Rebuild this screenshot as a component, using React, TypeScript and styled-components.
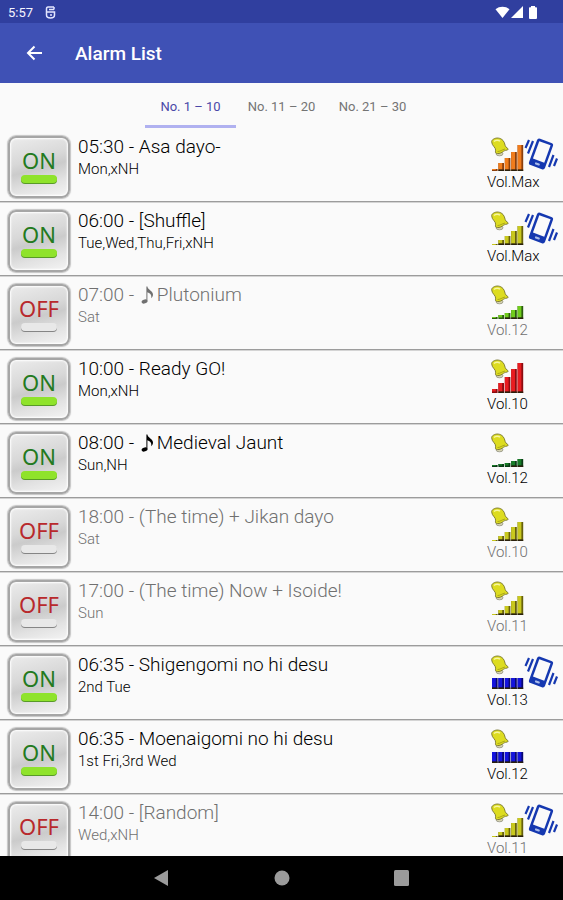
import React, { useState } from "react";
import styled, { createGlobalStyle } from "styled-components";

const GlobalStyle = createGlobalStyle`
  *, *::before, *::after { box-sizing: border-box; }
  body {
    margin: 0;
    background: #fafafa;
    font-family: Roboto, "Noto Sans", sans-serif;
  }
`;

const Screen = styled.div`
  display: flex;
  flex-direction: column;
  height: 100vh;
  overflow: hidden;
`;

const StatusBar = styled.div`
  display: flex;
  align-items: center;
  flex: none;
  height: 23px;
  padding: 2px 24px 0 8px;
  gap: 12px;
  background: #303f9f;
  color: #f4f5ff;
  font-size: 13px;
  line-height: 16px;
`;

const StatusIcons = styled.div`
  display: flex;
  align-items: center;
  margin-left: auto;
  gap: 1px;
`;

const AppBar = styled.header`
  display: flex;
  align-items: center;
  flex: none;
  height: 60px;
  padding: 0 22px;
  gap: 28px;
  background: #3f51b5;
  color: #fff;
`;

const BackButton = styled.button`
  display: flex;
  padding: 0;
  border: 0;
  background: none;
  color: inherit;
`;

const Title = styled.h1`
  margin: 0;
  padding-top: 2px;
  font-size: 19px;
  font-weight: 500;
  line-height: 24px;
`;

const Tabs = styled.nav`
  display: flex;
  justify-content: center;
  flex: none;
  height: 45px;
`;

const Tab = styled.button<{ $active: boolean }>`
  width: 91px;
  padding: 4px 0 0;
  border: 0;
  border-bottom: 3px solid ${(p) => (p.$active ? "#b0b1f0" : "transparent")};
  background: none;
  color: ${(p) => (p.$active ? "#4a48a8" : "#747474")};
  font-family: inherit;
  font-size: 13px;
  white-space: nowrap;
`;

const List = styled.ul`
  flex: 1;
  min-height: 0;
  margin: 0;
  padding: 0;
  overflow: hidden;
  list-style: none;
`;

const Row = styled.li<{ $on: boolean }>`
  display: flex;
  align-items: flex-start;
  height: 74px;
  padding: 8px 4px 0 8px;
  gap: 8px;
  border-bottom: 1px solid #9c9c9c;
  box-shadow: 0 1px 0 #d4d4d4;
  color: ${(p) => (p.$on ? "#000" : "#707070")};
  font-weight: 300;
`;

const Toggle = styled.button<{ $on: boolean }>`
  display: flex;
  flex-direction: column;
  align-items: center;
  flex: none;
  width: 62px;
  height: 62px;
  padding: 11px 0 0;
  border: 2px solid #a6a6a6;
  border-radius: 8px;
  background: linear-gradient(165deg, #ececec 0%, #d8d8d8 38%, #cbcbcb 52%, #e2e2e2 75%, #f4f4f4 100%);
  box-shadow: inset 0 0 2px 1px #ffffff, 0 0 1px 1px #c4c4c4;
  color: ${(p) => (p.$on ? "#237a20" : "#b8292c")};
  font-family: "Noto Sans", sans-serif;
  font-size: 22px;
  line-height: 22px;
`;

const Lamp = styled.span<{ $on: boolean }>`
  width: 36px;
  height: 8px;
  margin-top: 4px;
  border-radius: 4px;
  background: ${(p) => (p.$on ? "#8fe32b" : "#e8e8e8")};
  box-shadow: 0 1px 0 ${(p) => (p.$on ? "#589a27" : "#858585")};
`;

const Details = styled.div`
  flex: 1;
  min-width: 0;
`;

const Name = styled.div`
  display: flex;
  align-items: center;
  font-size: 19px;
  line-height: 22px;
  white-space: pre;
`;

const Days = styled.div`
  font-size: 15px;
  line-height: 22px;
`;

const Sound = styled.div`
  flex: none;
  width: 72px;
`;

const Symbols = styled.div`
  display: flex;
  height: 36px;
  padding-left: 4px;
`;

const Volume = styled.div`
  font-size: 15px;
  line-height: 20px;
`;

const NavBar = styled.footer`
  display: flex;
  align-items: center;
  justify-content: center;
  flex: none;
  height: 44px;
  gap: 104px;
  background: #000;
`;

const NavButton = styled.button`
  display: flex;
  padding: 0;
  border: 0;
  background: none;
`;

const Note = () => (
  <svg width="18" height="20" viewBox="0 0 18 20" fill="currentColor" aria-label="Music">
    <ellipse cx="5.500" cy="16.500" rx="3" ry="2" transform="rotate(-22 5.500 16.500)" />
    <path d="M7.400 1.500h1c.5 3.500 5.600 4.200 5.600 8 0 1.700-.8 2.800-1.900 3.800.9-3.300-.7-5.100-3.700-6.100V16.500h-1z" />
  </svg>
);

const palettes = {
  orange: ["#f07c1c", "#8b3f0c"],
  yellow: ["#c8c81e", "#66600c"],
  lime: ["#70cc1c", "#2c5c10"],
  red: ["#e81c20", "#8c0c10"],
  green: ["#187c28", "#0b3c16"],
  blue: ["#1414dc", "#080870"],
};
type Tone = keyof typeof palettes;

const SoundIcon = ({ tone, levels }: { tone: Tone; levels: number[] }) => {
  const [light, dark] = palettes[tone];
  return (
    <svg width="33" height="36" viewBox="0 0 33 36" aria-hidden="true">
      <ellipse cx="8.500" cy="17.800" rx="3.500" ry="2" fill="#d5d2b0" stroke="#8a8a7a" strokeWidth=".7" />
      <path
        d="M2.200 3.300C5 1.300 9.500 1.600 12 4.500c2 2.400 1.700 4.800 2.800 6.300l2 1.700c.6.700.2 1.500-.8 1.600-2 .2-3 .8-4.500 1.900-2.500 1.700-4.600 1.800-6.100 1.300-1.400-.5-.9-1.800-.8-3.100C5 11.500.6 9.600.7 5.800c0-1.100.5-1.900 1.500-2.500z"
        fill="#dddc20" stroke="#77752c" strokeWidth=".9"
      />
      <path d="M3 5.500C4.500 4 7.500 3.800 9 5.300" fill="none" stroke="#f8f7a0" strokeWidth="1.500" />
      <path d="M6.500 15.500c2.500.2 4.500-1.800 7.500-2.500" fill="none" stroke="#aaa719" strokeWidth="1" />
      {levels.map((h, i) => (
        <g key={i}>
          <rect x={1 + i * 6.400} y={35 - h} width="5.600" height={h} fill={dark} />
          <rect x={1 + i * 6.400} y={35 - h} width="3.800" height={Math.max(1, h - 1.500)} fill={light} />
          {h > 4 && <rect x={1 + i * 6.400} y="33.500" width="5.600" height="1.500" fill="#29200c" />}
        </g>
      ))}
    </svg>
  );
};

const PhoneIcon = () => (
  <svg width="35" height="36" viewBox="0 0 35 36" aria-label="Vibrate">
    <g transform="rotate(20 17 18)">
      <rect x="8.500" y="4" width="17" height="28" rx="2.500" fill="#1538b0" />
      <rect x="11" y="6.500" width="12" height="18.500" fill="#fafafa" />
      <rect x="14.500" y="27.500" width="5" height="2.200" rx="1" fill="#a9bbea" />
    </g>
    <path d="M5 4 1.500 12M9 5 4 17.500M29.500 19l-4.500 12M33 22.500 30 30" fill="none" stroke="#1538b0" strokeWidth="2.200" />
  </svg>
);

const WifiIcon = () => (
  <svg width="15" height="13" viewBox="0 0 15 13" fill="#fff" aria-hidden="true">
    <path d="M.5 3.200C4.500-.1 10.500-.1 14.500 3.200L7.500 12z" />
  </svg>
);
const SignalIcon = () => (
  <svg width="13" height="13" viewBox="0 0 13 13" fill="#fff" aria-hidden="true"><path d="M12 0v12H0z" /></svg>
);
const BatteryIcon = () => (
  <svg width="14" height="13" viewBox="0 0 14 13" fill="#fff" aria-hidden="true">
    <path d="M6 0h4v1.200h1.200q.8 0 .8.8v10q0 1-1 1H5q-1 0-1-1V2q0-.8.8-.8H6z" />
  </svg>
);
const DebugIcon = () => (
  <svg width="11" height="13" viewBox="0 0 11 13" fill="none" stroke="#e3e6ff" strokeWidth="1.500" aria-hidden="true">
    <path d="M9 1H3Q1.500 1 1.500 3v6q0 3 4 3t4-3V6H1.500M9 1v2.500M4 3.400h5M5 9h2" />
  </svg>
);

interface Alarm {
  time: string;
  title: string;
  music?: boolean;
  days: string;
  on: boolean;
  tone: Tone;
  levels: number[];
  volume: string;
  vibrate?: boolean;
}

const steps = [1, 5, 9, 14, 19];
const full = [11, 11, 11, 11, 11];

const initialAlarms: Alarm[] = [
  { time: "05:30", title: "Asa dayo-", days: "Mon,xNH", on: true, tone: "orange", levels: [2, 8, 13, 19, 26], volume: "Max", vibrate: true },
  { time: "06:00", title: "[Shuffle]", days: "Tue,Wed,Thu,Fri,xNH", on: true, tone: "yellow", levels: steps, volume: "Max", vibrate: true },
  { time: "07:00", title: "Plutonium", music: true, days: "Sat", on: false, tone: "lime", levels: [2, 4, 6, 9, 13], volume: "12" },
  { time: "10:00", title: "Ready GO!", days: "Mon,xNH", on: true, tone: "red", levels: [4, 10, 16, 24, 30], volume: "10" },
  { time: "08:00", title: "Medieval Jaunt", music: true, days: "Sun,NH", on: true, tone: "green", levels: [2, 3, 4, 6, 8], volume: "12" },
  { time: "18:00", title: "(The time) + Jikan dayo", days: "Sat", on: false, tone: "yellow", levels: steps, volume: "10" },
  { time: "17:00", title: "(The time) Now + Isoide!", days: "Sun", on: false, tone: "yellow", levels: steps, volume: "11" },
  { time: "06:35", title: "Shigengomi no hi desu", days: "2nd Tue", on: true, tone: "blue", levels: full, volume: "13", vibrate: true },
  { time: "06:35", title: "Moenaigomi no hi desu", days: "1st Fri,3rd Wed", on: true, tone: "blue", levels: full, volume: "12" },
  { time: "14:00", title: "[Random]", days: "Wed,xNH", on: false, tone: "yellow", levels: steps, volume: "11", vibrate: true },
];

const tabs = ["No. 1 – 10", "No. 11 – 20", "No. 21 – 30"];

export default function App() {
  const [active, setActive] = useState(0);
  const [alarms, setAlarms] = useState(initialAlarms);
  const toggle = (index: number) =>
    setAlarms(alarms.map((a, i) => (i === index ? { ...a, on: !a.on } : a)));

  return (
    <Screen>
      <GlobalStyle />
      <StatusBar>
        <span>5:57</span>
        <DebugIcon />
        <StatusIcons>
          <WifiIcon />
          <SignalIcon />
          <BatteryIcon />
        </StatusIcons>
      </StatusBar>
      <AppBar>
        <BackButton aria-label="Back">
          <svg width="25" height="24" viewBox="0 0 25 24" fill="none" stroke="#fff" strokeWidth="2" aria-hidden="true">
            <path d="M20 12H6M12.500 5.500 6 12l6.500 6.500" />
          </svg>
        </BackButton>
        <Title>Alarm List</Title>
      </AppBar>
      <Tabs>
        {tabs.map((label, i) => (
          <Tab key={label} $active={i === active} aria-pressed={i === active} onClick={() => setActive(i)}>
            {label}
          </Tab>
        ))}
      </Tabs>
      <List>
        {alarms.map((a, i) => (
          <Row key={i} $on={a.on}>
            <Toggle $on={a.on} aria-pressed={a.on} onClick={() => toggle(i)}>
              {a.on ? "ON" : "OFF"}
              <Lamp $on={a.on} />
            </Toggle>
            <Details>
              <Name>
                {`${a.time} - `}
                {a.music && <Note />}
                {a.title}
              </Name>
              <Days>{a.days}</Days>
            </Details>
            <Sound>
              <Symbols>
                <SoundIcon tone={a.tone} levels={a.levels} />
                {a.vibrate && <PhoneIcon />}
              </Symbols>
              <Volume>Vol.{a.volume}</Volume>
            </Sound>
          </Row>
        ))}
      </List>
      <NavBar>
        <NavButton aria-label="Back">
          <svg width="16" height="18" viewBox="0 0 16 18" fill="#9b9b9b" aria-hidden="true"><path d="M14 1v16L0 9z" /></svg>
        </NavButton>
        <NavButton aria-label="Home">
          <svg width="16" height="16" viewBox="0 0 16 16" fill="#9b9b9b" aria-hidden="true"><circle cx="8" cy="8" r="7.500" /></svg>
        </NavButton>
        <NavButton aria-label="Overview">
          <svg width="16" height="16" viewBox="0 0 16 16" fill="#9b9b9b" aria-hidden="true"><rect width="15" height="16" rx="1.500" /></svg>
        </NavButton>
      </NavBar>
    </Screen>
  );
}
